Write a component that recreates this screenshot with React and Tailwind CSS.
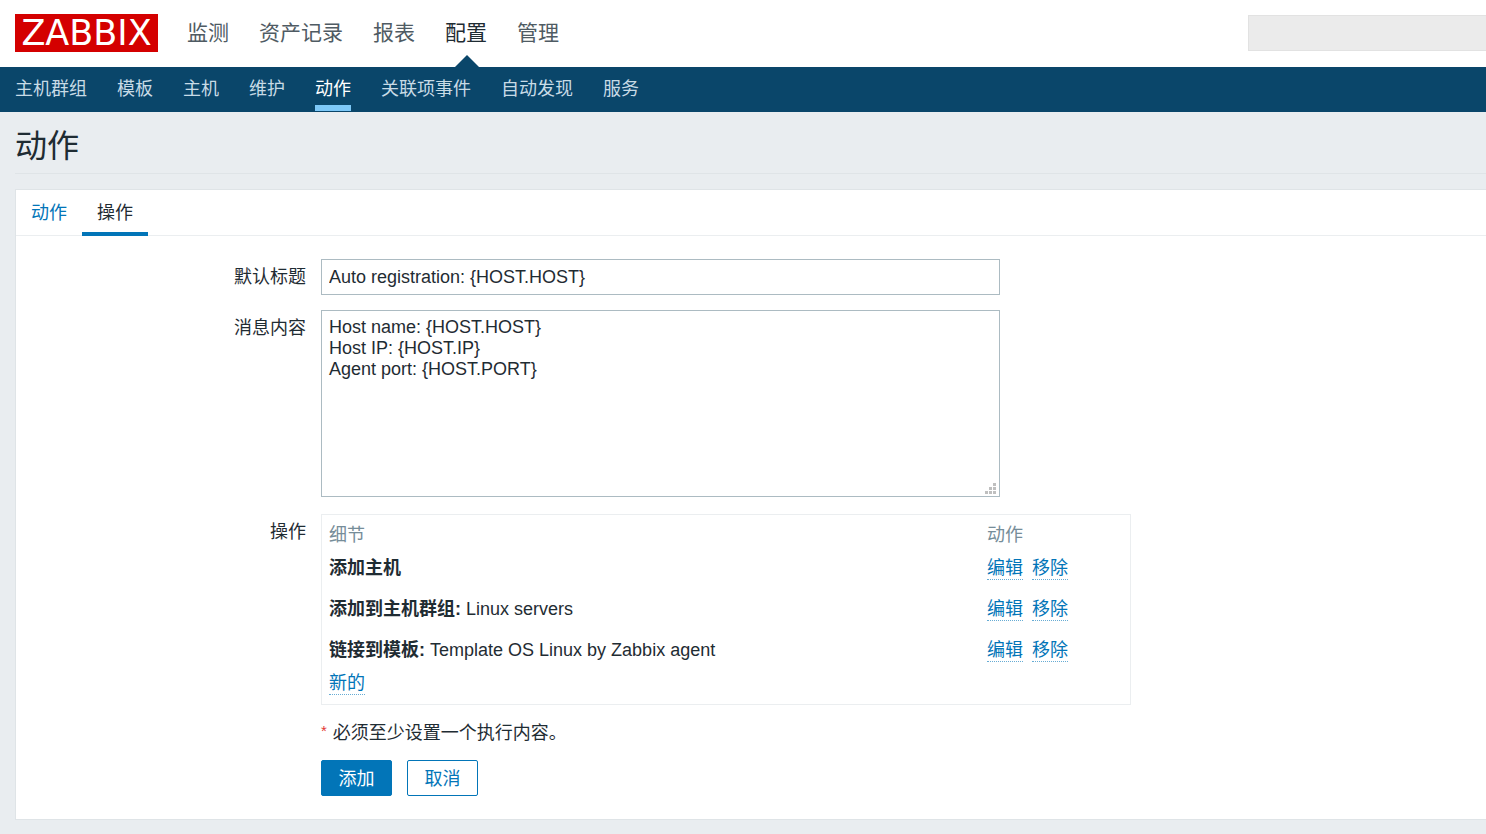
import React from "react";

const mainMenu = ["监测", "资产记录", "报表", "配置", "管理"];
const subMenu = [
  "主机群组",
  "模板",
  "主机",
  "维护",
  "动作",
  "关联项事件",
  "自动发现",
  "服务",
];

const operations = [
  { id: 1, label: "添加主机", value: "" },
  { id: 2, label: "添加到主机群组:", value: "Linux servers" },
  { id: 3, label: "链接到模板:", value: "Template OS Linux by Zabbix agent" },
];

const defaultMessage = `Host name: {HOST.HOST}
Host IP: {HOST.IP}
Agent port: {HOST.PORT}`;

const ActionLink = ({ children }) => (
  <a
    href="#"
    className="inline-block leading-[22px] text-[#0275b8] border-b border-dotted border-[#67acd4] hover:border-solid"
  >
    {children}
  </a>
);

const Header = () => {
  return (
    <header>
      <div className="flex items-center h-[67px] bg-white pl-[15px] pb-[2px]">
        <a
          href="#"
          className="flex items-center justify-center w-[143px] h-[38px] pt-[2px] bg-[#d40000] text-white text-[35px] leading-none font-['DejaVu_Sans',sans-serif]"
        >
          ZABBIX
        </a>
        <nav className="flex gap-[30px] ml-[29px] h-full">
          {mainMenu.map((item) => (
            <a
              key={item}
              href="#"
              className={
                item === "配置"
                  ? "relative flex items-center text-[21px] text-[#1f2c33]"
                  : "flex items-center text-[21px] text-[#4f5b63]"
              }
            >
              {item}
              {item === "配置" && (
                <svg
                  className="absolute -bottom-[2px] left-1/2 -translate-x-[11px]"
                  width="24"
                  height="12"
                  viewBox="0 0 24 12"
                >
                  <path d="M12 0L24 12H0Z" fill="#0a466a" />
                </svg>
              )}
            </a>
          ))}
        </nav>
        <input
          type="text"
          aria-label="搜索"
          className="ml-auto w-[238px] h-9 px-2 bg-[#ebebeb] border border-r-0 border-[#e2e2e2] outline-none"
        />
      </div>
      <nav className="flex gap-[30px] h-[45px] pl-[15px] bg-[#0a466a]">
        {subMenu.map((item) => (
          <a
            key={item}
            href="#"
            className={
              item === "动作"
                ? "h-11 leading-[44px] border-b-6 border-[#7dc8f7] text-white"
                : "h-11 leading-[44px] text-[#c8dbe6]"
            }
          >
            {item}
          </a>
        ))}
      </nav>
    </header>
  );
};

const OperationsTable = () => {
  return (
    <div className="w-[810px] max-w-full border border-[#ebeef0] py-1">
      <table className="w-full table-fixed text-left">
        <thead>
          <tr className="text-[#768d99]">
            <th className="w-[658px] h-[33px] px-[7px] font-normal">细节</th>
            <th className="h-[33px] px-[7px] font-normal">动作</th>
          </tr>
        </thead>
        <tbody>
          {operations.map((op) => (
            <tr key={op.id} className="align-top">
              <td className="px-[7px] pb-2 leading-[33px] [tr:last-child>&]:pb-0">
                <b>{op.label}</b> {op.value}
              </td>
              <td className="px-[7px] pb-2 leading-[33px] [tr:last-child>&]:pb-0">
                <span className="flex items-center gap-[9px] h-[33px]">
                  <ActionLink>编辑</ActionLink>
                  <ActionLink>移除</ActionLink>
                </span>
              </td>
            </tr>
          ))}
        </tbody>
      </table>
      <div className="flex items-center h-[33px] px-[7px]">
        <ActionLink>新的</ActionLink>
      </div>
    </div>
  );
};

const ActionForm = () => {
  return (
    <form className="grid grid-cols-[290px_1fr] gap-[15px] py-[23px]">
      <label htmlFor="subject" className="text-right leading-[37px] h-9">
        默认标题
      </label>
      <div>
        <input
          id="subject"
          type="text"
          defaultValue="Auto registration: {HOST.HOST}"
          className="block w-[679px] max-w-full h-9 px-[7px] border border-[#acbbc2] outline-none"
        />
      </div>

      <label htmlFor="message" className="text-right leading-[37px]">
        消息内容
      </label>
      <div className="relative w-[679px] max-w-full">
        <textarea
          id="message"
          defaultValue={defaultMessage}
          className="block w-full h-[187px] px-[7px] py-[6px] leading-[21px] border border-[#acbbc2] outline-none resize-none"
        />
        <svg
          className="absolute right-1 bottom-[3px]"
          width="11"
          height="11"
          viewBox="0 0 11 11"
          fill="#bfbfbf"
        >
          <path d="M8 0h3v3H8zM4 4h3v3H4zM8 4h3v3H8zM0 8h3v3H0zM4 8h3v3H4zM8 8h3v3H8z" />
        </svg>
      </div>

      <div className="pt-[2px] text-right leading-[37px]">操作</div>
      <div className="pt-[2px]">
        <OperationsTable />
        <p className="mt-[10px] h-9 leading-9">
          <span className="text-[#e33734] text-[15px] mr-[6px] align-[3px] leading-none">
            *
          </span>
          必须至少设置一个执行内容。
        </p>
        <div className="flex gap-[15px] mt-[9px]">
          <button
            type="button"
            className="min-w-[71px] h-9 px-4 pt-[2px] rounded-[2px] border border-[#0275b8] bg-[#0275b8] text-white"
          >
            添加
          </button>
          <button
            type="button"
            className="min-w-[71px] h-9 px-4 pt-[2px] rounded-[2px] border border-[#0275b8] bg-white text-[#0275b8]"
          >
            取消
          </button>
        </div>
      </div>
    </form>
  );
};

const App = () => {
  return (
    <div className="min-h-screen overflow-x-hidden bg-[#e9edf0] text-[18px] text-[#1f2c33] font-['Liberation_Sans','Noto_Sans_CJK_SC',sans-serif]">
      <Header />
      <main className="pl-[15px] pb-[14px]">
        <h1 className="h-[62px] text-[32px] leading-[68px] border-b border-[#dfe4e7]">
          动作
        </h1>
        <section className="mt-[15px] bg-white border border-r-0 border-[#dfe4e7]">
          <nav className="flex h-[46px] border-b border-[#ebeef0]">
            <a href="#" className="h-[46px] px-[15px] leading-[47px] text-[#0275b8]">
              动作
            </a>
            <a
              href="#"
              className="h-[46px] px-[15px] leading-[47px] border-b-4 border-[#0275b8]"
            >
              操作
            </a>
          </nav>
          <ActionForm />
        </section>
      </main>
    </div>
  );
};

export default App;
